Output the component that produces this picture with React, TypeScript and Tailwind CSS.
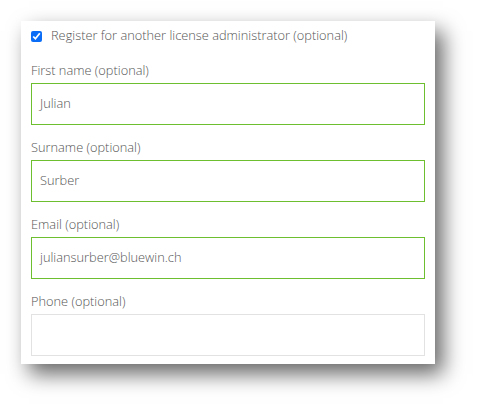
const fields = [
  { label: "First name (optional)", value: "Julian", active: true },
  { label: "Surname (optional)", value: "Surber", active: true },
  { label: "Email (optional)", value: "juliansurber@bluewin.ch", active: true },
  { label: "Phone (optional)", value: "", active: false },
]

export default function App() {
  return (
    <div className="w-[477px] h-[407px] bg-white pt-[21px] pl-[21px] font-['Open_Sans',sans-serif] font-light text-[#555]">
      <div className="w-[414px] h-[343px] bg-white shadow-[8px_10px_20px_rgba(0,0,0,0.6)] px-[10px] pt-[8px]">
        <label className="flex items-center h-[14px] text-[12.8px]">
          <input type="checkbox" defaultChecked className="w-[11px] h-[11px] m-0 accent-[#0b6df6]" />
          <span className="ml-[9px]">Register for another license administrator (optional)</span>
        </label>
        {fields.map((f, i) => (
          <div key={f.label} className={i === 0 ? "mt-[19px]" : "mt-[14px]"}>
            <div className="text-[12.8px] leading-[16px]">{f.label}</div>
            <div
              className={
                "mt-[5px] h-[42px] border flex items-center px-[8px] text-[12.8px] " +
                (f.active ? "border-[#6dbf2f]" : "border-[#e2e2e2]")
              }
            >
              {f.value}
            </div>
          </div>
        ))}
      </div>
    </div>
  )
}
